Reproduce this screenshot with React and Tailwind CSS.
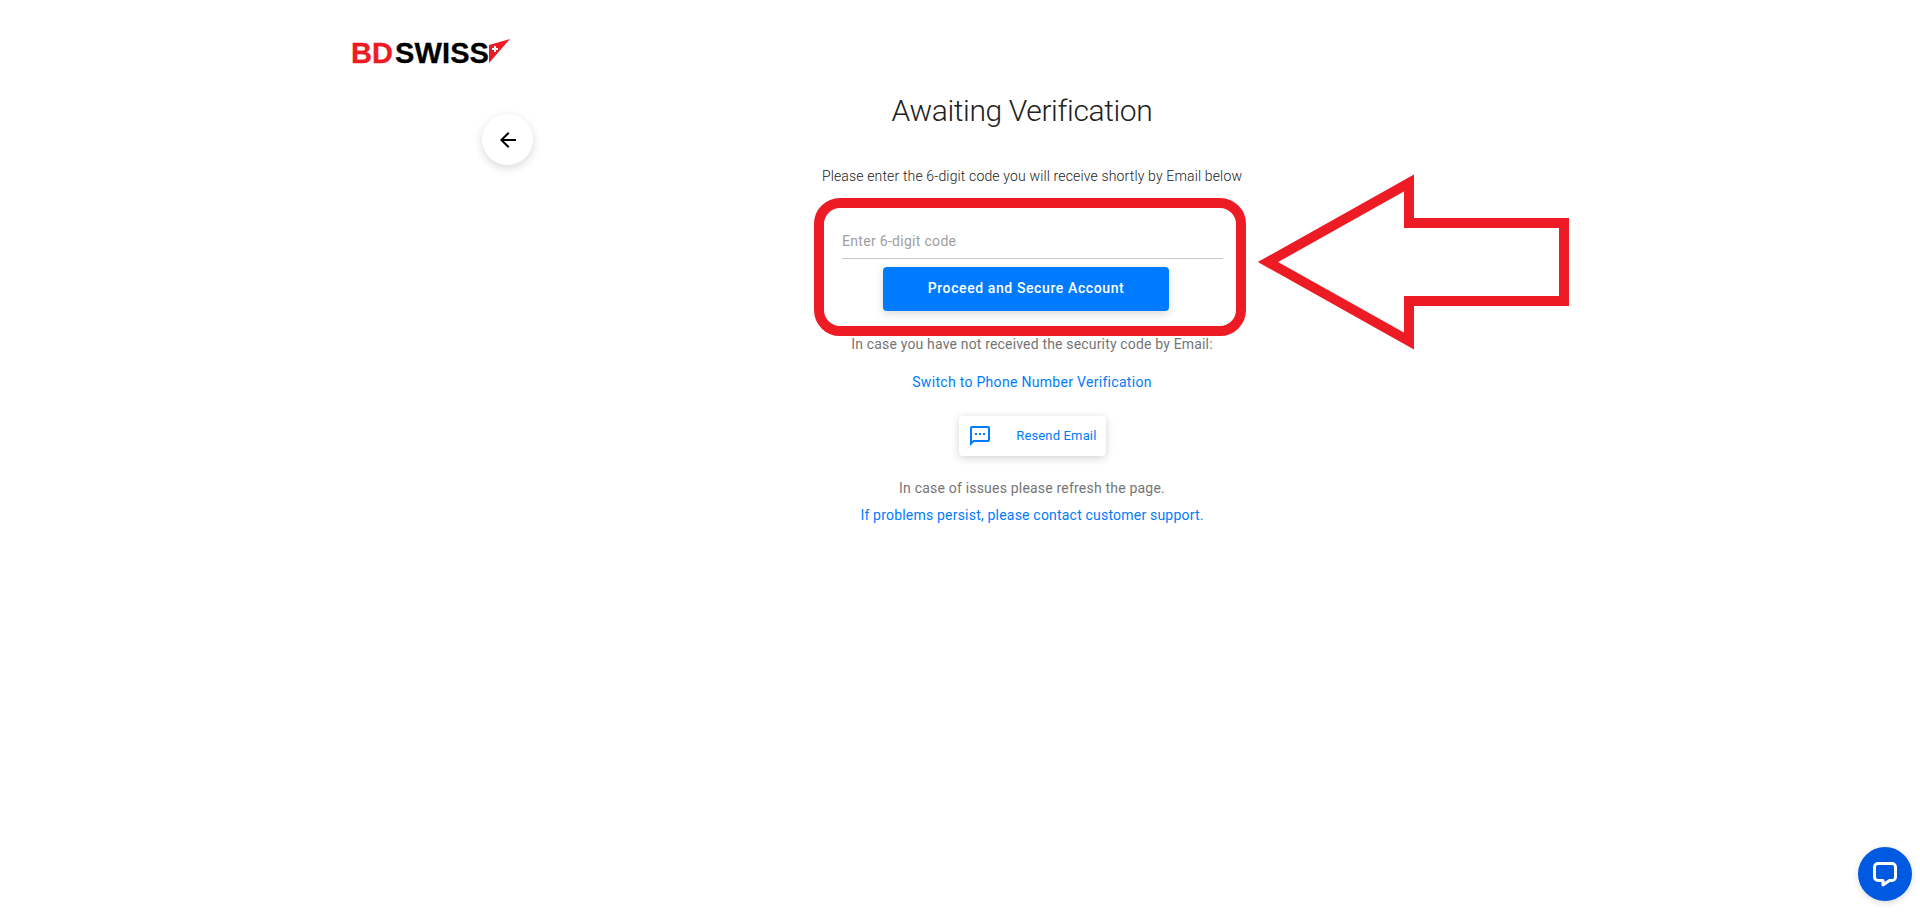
import { useState } from 'react';

const roboto = { fontFamily: 'Roboto, sans-serif' };

function Logo() {
    return (
        <div className="flex h-[25px] w-[158px] items-end justify-between">
            <div className="mb-[1px] ml-[-1px] flex">
                <span className="text-[29px] leading-[20px] font-bold tracking-[0.1px] text-[#ed1c24] [-webkit-text-stroke:0.3px_#ed1c24] [font-family:'Liberation_Sans',sans-serif]">BD</span>
                <span className="ml-[2px] text-[29px] leading-[20px] font-bold tracking-[0.1px] text-black [-webkit-text-stroke:0.3px_#000] [font-family:'Liberation_Sans',sans-serif]">SWISS</span>
            </div>
            <svg width="22" height="25" viewBox="0 0 22 25" className="shrink-0">
                <polygon points="0,6 21,0 0,24" fill="#ed1c24" />
                <path d="M3 9h2V7h2v2h2v2H7v2H5v-2H3z" fill="#fff" />
            </svg>
        </div>
    );
}

function BackIcon() {
    return (
        <svg width="24" height="24" viewBox="0 0 24 24" fill="#000">
            <path d="M20 11H7.83l5.59-5.59L12 4 4 12l8 8 1.41-1.41L7.83 13H20v-2z" />
        </svg>
    );
}

function ChatIcon() {
    return (
        <svg width="24" height="24" viewBox="0 0 24 24" fill="#007bff">
            <path d="M20 2H4c-1.1 0-1.99.9-1.99 2L2 22l4-4h14c1.1 0 2-.9 2-2V4c0-1.1-.9-2-2-2zm0 14H5.17L4 17.17V4h16v12zM7 9h2v2H7zm4 0h2v2h-2zm4 0h2v2h-2z" />
        </svg>
    );
}

export default function App() {
    const [code, setCode] = useState('');

    return (
        <div className="relative min-h-[914px] bg-white" style={roboto}>
            <header className="pl-[352px] pt-[39px]">
                <Logo />
            </header>

            <div className="flex pl-[482px]">
                <button className="mt-[50px] flex h-[51px] w-[51px] items-center justify-center rounded-full bg-white shadow-[0_3px_10px_rgba(0,0,0,0.15)]">
                    <BackIcon />
                </button>

                <main className="ml-[281px] flex w-[436px] flex-col items-center">
                    <h1 className="mr-[20px] mt-[29px] text-[30px] leading-[36px] font-light tracking-[-0.38px] text-[#212121]">Awaiting Verification</h1>

                    <p className="mt-[37px] text-[14px] leading-[20px] font-light tracking-[0.15px] text-[#212121]">
                        Please enter the 6-digit code you will receive shortly by Email below
                    </p>

                    <div className="ml-[-4px] mt-[12px] flex h-[138px] w-[432px] flex-col items-start rounded-[26px] border-[10px] border-[#ed1c24] pt-[21px]">
                        <input
                            value={code}
                            onChange={(e) => setCode(e.target.value)}
                            placeholder="Enter 6-digit code"
                            className="ml-[18px] h-[30px] w-[381px] border-b border-[#c8c8c8] pb-[5px] text-[14px] tracking-[0.3px] text-[#333] placeholder-[#9e9e9e] outline-none"
                        />
                        <button className="ml-[59px] mt-[8px] h-[44px] w-[286px] rounded-[4px] bg-[#007bff] pb-[2px] text-[14px] font-medium tracking-[0.6px] text-white shadow-[0_3px_8px_rgba(0,0,0,0.15)]">
                            Proceed and Secure Account
                        </button>
                    </div>

                    <p className="mt-[-2px] text-[14px] leading-[20px] tracking-[0.17px] text-[#757575]">
                        In case you have not received the security code by Email:
                    </p>

                    <a className="mt-[18px] text-[14px] leading-[20px] tracking-[0.3px] text-[#007bff]">Switch to Phone Number Verification</a>

                    <button className="mt-[24px] flex h-[40px] w-[147px] items-center justify-between rounded-[4px] bg-white pb-[1px] pl-[9px] pr-[9px] text-[13px] font-normal tracking-[0.15px] text-[#007bff] shadow-[0_2px_8px_rgba(0,0,0,0.18)]">
                        <ChatIcon />
                        Resend Email
                    </button>

                    <p className="mt-[22px] text-[14px] leading-[20px] tracking-[0.2px] text-[#757575]">In case of issues please refresh the page.</p>
                    <a className="mt-[7px] text-[14px] leading-[20px] tracking-[0.2px] text-[#007bff]">If problems persist, please contact customer support.</a>
                </main>
            </div>

            {/* annotation arrow over the page */}
            <svg width="330" height="190" viewBox="0 0 330 190" className="absolute left-[1250px] top-[170px]">
                <polygon points="159,13 159,53 314,53 314,131 159,131 159,171 18,92" fill="none" stroke="#ed1c24" strokeWidth="10" />
            </svg>

            {/* chat widget */}
            <button className="fixed left-[1858px] top-[847px] flex h-[54px] w-[54px] items-center justify-center rounded-full bg-[#0059e1] shadow-[0_2px_6px_rgba(0,0,0,0.15)]">
                <svg width="28" height="28" viewBox="0 0 28 28" fill="none">
                    <path d="M7 3.5h14a3.5 3.5 0 0 1 3.5 3.5v10a3.5 3.5 0 0 1-3.5 3.5h-2.5L12 25v-4.5H7A3.5 3.5 0 0 1 3.5 17V7A3.5 3.5 0 0 1 7 3.5z" stroke="#fff" strokeWidth="3" strokeLinejoin="round" />
                </svg>
            </button>
        </div>
    );
}
